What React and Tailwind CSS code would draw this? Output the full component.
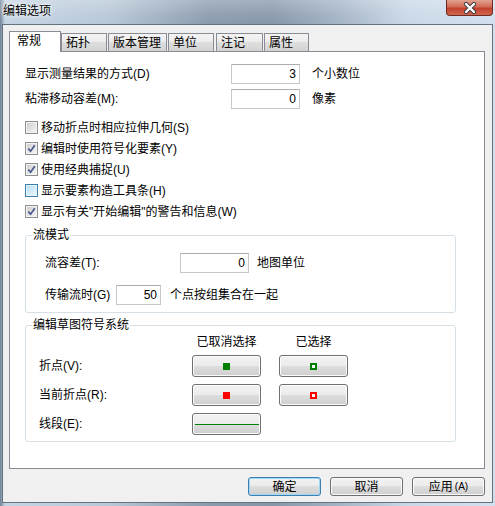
const font = "font-['Liberation_Sans','Noto_Sans_CJK_SC',sans-serif]";

const TABS = [
  { label: '拓扑', w: 'w-[46px]', gap: 'ml-0' },
  { label: '版本管理', w: 'w-[59px]', gap: 'ml-[1px]' },
  { label: '单位', w: 'w-[46px]', gap: 'ml-[1px]' },
  { label: '注记', w: 'w-[47px]', gap: 'ml-[2px]' },
  { label: '属性', w: 'w-[45px]', gap: 'ml-[1px]' },
];

const CHECKS = [
  { label: '移动折点时相应拉伸几何', key: 'S', checked: false },
  { label: '编辑时使用符号化要素', key: 'Y', checked: true },
  { label: '使用经典捕捉', key: 'U', checked: true },
  { label: '显示要素构造工具条', key: 'H', checked: false, hot: true },
  { label: '显示有关"开始编辑"的警告和信息', key: 'W', checked: true },
];

function Field({ value, w = 'w-[69px]' }) {
  return (
    <div
      className={`${w} h-[20px] shrink-0 border border-[#c5c8ce] border-t-[#abadb3] bg-white pr-[3px] text-right leading-[18px]`}
    >
      {value}
    </div>
  );
}

function Check({ label, hotkey, checked, hot }) {
  return (
    <div className="flex h-[21px] items-center">
      <div
        className={`flex h-[13px] w-[13px] items-center justify-center border ${
          hot ? 'border-[#3c7fb1] bg-[#e8f4fb]' : 'border-[#8e8f8f] bg-[#f4f4f4]'
        }`}
      >
        <div
          className={`relative h-[9px] w-[9px] ${
            hot
              ? 'bg-[linear-gradient(135deg,#b9dff5,#e9f6fd)]'
              : 'bg-[linear-gradient(135deg,#cfcfcf,#f4f4f4)]'
          }`}
        >
          {checked && (
            <svg viewBox="0 0 9 9" className="absolute inset-0 h-[9px] w-[9px]">
              <path d="M1.3 4.6 L3.6 7.2 L7.8 1.2" fill="none" stroke="#4a5a8c" strokeWidth="1.7" />
            </svg>
          )}
        </div>
      </div>
      <span className="ml-[3px]">
        {label}({hotkey})
      </span>
    </div>
  );
}

function Group({ title, className, children }) {
  return (
    <div className={`relative ml-[15px] w-[431px] rounded-[3px] border border-[#d5dfe5] ${className}`}>
      <span className="absolute left-[6px] top-[-9px] bg-white px-[1px] leading-[16px]">{title}</span>
      {children}
    </div>
  );
}

function SymButton({ children }) {
  return (
    <div className="flex h-[22px] w-[69px] shrink-0 items-center justify-center rounded-[3px] border border-[#707070] bg-[linear-gradient(#f2f2f2_0%,#ebebeb_50%,#dddddd_50%,#cfcfcf_100%)] shadow-[inset_0_0_0_1px_#fbfbfb]">
      {children}
    </div>
  );
}

function DialogButton({ children, primary }) {
  return (
    <div
      className={`flex h-[19px] w-[73px] items-center justify-center rounded-[3px] border ${
        primary
          ? 'border-[#3c7fb1] shadow-[inset_0_0_0_1px_#9fd9f6]'
          : 'border-[#707070] shadow-[inset_0_0_0_1px_#fbfbfb]'
      } bg-[linear-gradient(#f2f2f2_0%,#ebebeb_50%,#dddddd_50%,#cfcfcf_100%)] leading-[16px]`}
    >
      {children}
    </div>
  );
}

export default function App() {
  return (
    <div
      className={`${font} h-[506px] w-[495px] overflow-hidden bg-[linear-gradient(90deg,#6f8196_0%,#c4d4e4_1%,#b8c8d8_22%,#8b9bae_42%,#8797aa_55%,#a3b3c5_68%,#c9d8e7_82%,#d2e0ee_100%)] text-[12px] text-black`}
    >
      {/* title bar */}
      <div className="flex h-[24px] items-start justify-between bg-[linear-gradient(#ffffff40_0%,#ffffff10_60%,#00000000_100%)]">
        <div className="pl-[3px] pt-[3px] text-[12px] leading-[16px] text-black [text-shadow:0_0_6px_#ffffff,0_0_3px_#ffffff]">
          编辑选项
        </div>
        <div className="mr-[2px] flex h-[16px] w-[47px] items-center justify-center rounded-b-[4px] border border-t-0 border-[#6e2a22] bg-[linear-gradient(#e3a291_0%,#d26a56_45%,#c2402b_55%,#d0684e_100%)]">
          <svg viewBox="0 0 14 12" className="h-[12px] w-[14px]">
            <path d="M3 2 L11 10 M11 2 L3 10" stroke="#3b3b45" strokeWidth="4.2" strokeLinecap="round" />
            <path d="M3 2 L11 10 M11 2 L3 10" stroke="#ffffff" strokeWidth="2.4" strokeLinecap="round" />
          </svg>
        </div>
      </div>

      {/* client area */}
      <div className="mx-[2px] flex h-[479px] flex-col border border-[#66727f] bg-[#f0f0f0] pl-[6px] pr-[7px] pt-[6px]">
        {/* tabs */}
        <div className="flex h-[20px] items-end">
          <div className="relative z-10 -mb-px h-[21px] w-[52px] border border-b-0 border-[#898c95] bg-white pl-[7px] pt-[1px] leading-[16px]">
            常规
          </div>
          {TABS.map((t) => (
            <div
              key={t.label}
              className={`${t.w} ${t.gap} h-[18px] border border-b-0 border-[#898c95] bg-[linear-gradient(#f4f4f4_0%,#ebebeb_50%,#dedede_50%,#d2d2d2_100%)] pl-[4px] leading-[18px]`}
            >
              {t.label}
            </div>
          ))}
        </div>

        {/* panel */}
        <div className="h-[418px] w-[476px] border border-[#898c95] bg-white pt-[12px]">
          <div className="flex h-[20px] items-center pl-[15px]">
            <span className="w-[206px] shrink-0">显示测量结果的方式(D)</span>
            <Field value="3" />
            <span className="ml-[12px]">个小数位</span>
          </div>
          <div className="mt-[5px] flex h-[20px] items-center pl-[15px]">
            <span className="w-[206px] shrink-0">粘滞移动容差(M):</span>
            <Field value="0" />
            <span className="ml-[12px]">像素</span>
          </div>

          <div className="mt-[8px] pl-[15px]">
            {CHECKS.map((c) => (
              <Check key={c.key} label={c.label} hotkey={c.key} checked={c.checked} hot={c.hot} />
            ))}
          </div>

          <Group title="流模式" className="mt-[13px] h-[78px] pl-[19px] pt-[17px]">
            <div className="flex h-[20px] items-center">
              <span className="w-[135px] shrink-0">流容差(T):</span>
              <Field value="0" />
              <span className="ml-[8px]">地图单位</span>
            </div>
            <div className="mt-[12px] flex h-[20px] items-center">
              <span className="w-[71px] shrink-0">传输流时(G)</span>
              <Field value="50" w="w-[45px]" />
              <span className="ml-[9px]">个点按组集合在一起</span>
            </div>
          </Group>

          <Group title="编辑草图符号系统" className="mt-[12px] h-[117px] pl-[13px] pt-[8px]">
            <div className="flex h-[16px] items-center leading-[16px]">
              <span className="w-[153px] shrink-0" />
              <span className="w-[69px] text-center">已取消选择</span>
              <span className="ml-[18px] w-[69px] text-center">已选择</span>
            </div>
            <div className="mt-[5px] flex h-[22px] items-center">
              <span className="w-[153px] shrink-0">折点(V):</span>
              <SymButton>
                <div className="h-[7px] w-[7px] bg-[#008000]" />
              </SymButton>
              <div className="ml-[18px]">
                <SymButton>
                  <div className="h-[7px] w-[7px] border-2 border-[#008000] bg-white" />
                </SymButton>
              </div>
            </div>
            <div className="mt-[7px] flex h-[22px] items-center">
              <span className="w-[153px] shrink-0">当前折点(R):</span>
              <SymButton>
                <div className="h-[7px] w-[7px] bg-[#ff0000]" />
              </SymButton>
              <div className="ml-[18px]">
                <SymButton>
                  <div className="h-[7px] w-[7px] border-2 border-[#ff0000] bg-white" />
                </SymButton>
              </div>
            </div>
            <div className="mt-[7px] flex h-[22px] items-center">
              <span className="w-[153px] shrink-0">线段(E):</span>
              <SymButton>
                <div className="mt-[1px] h-[1px] w-[64px] bg-[#008000]" />
              </SymButton>
            </div>
          </Group>
        </div>

        {/* dialog buttons */}
        <div className="mt-[8px] flex justify-end gap-[9px]">
          <DialogButton primary>确定</DialogButton>
          <DialogButton>取消</DialogButton>
          <DialogButton>
            应用<span className="ml-[2px] text-[10px]">(A)</span>
          </DialogButton>
        </div>
      </div>
    </div>
  );
}
